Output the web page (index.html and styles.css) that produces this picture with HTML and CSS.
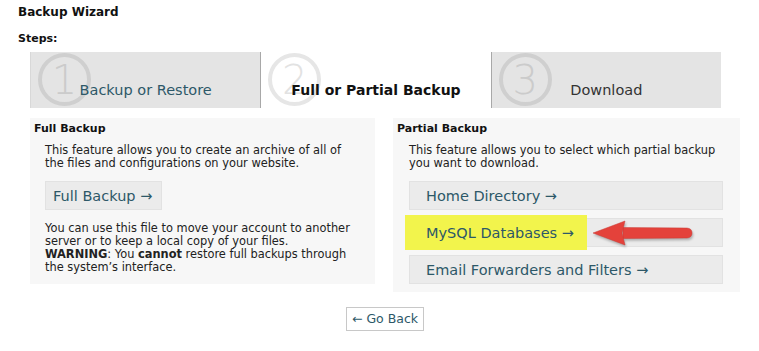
FILE: index.html
```html
<!DOCTYPE html>
<html lang="en">
<head>
    <meta charset="UTF-8">
    <title>Backup Wizard</title>
    <link rel="stylesheet" href="styles.css">
</head>
<body>
    <div class="page">
        <h1 class="title">Backup Wizard</h1>
        <div class="steps-label">Steps:</div>

        <div class="content">
            <div class="tabs">
                <div class="tab">
                    <span class="step-num">1</span>
                    <span class="tab-label">Backup or Restore</span>
                </div>
                <div class="tab active">
                    <span class="step-num">2</span>
                    <span class="tab-label">Full or Partial Backup</span>
                </div>
                <div class="tab">
                    <span class="step-num">3</span>
                    <span class="tab-label">Download</span>
                </div>
            </div>

            <div class="panels">
                <div class="panel panel-full">
                    <h3 class="panel-title">Full Backup</h3>
                    <div class="panel-body">
                        <p>This feature allows you to create an archive of all of the files and configurations on your website.</p>
                        <a class="btn btn-small" href="#">Full Backup &rarr;</a>
                        <p>You can use this file to move your account to another server or to keep a local copy of your files.<br>
                        <b>WARNING</b>: You <b>cannot</b> restore full backups through the system&rsquo;s interface.</p>
                    </div>
                </div>

                <div class="panel panel-partial">
                    <h3 class="panel-title">Partial Backup</h3>
                    <div class="panel-body">
                        <p>This feature allows you to select which partial backup you want to download.</p>
                        <div class="btn-list">
                            <a class="btn" href="#">Home Directory &rarr;</a>
                            <a class="btn btn-marked" href="#">
                                <span class="highlight"></span>
                                <span class="btn-text">MySQL Databases &rarr;</span>
                                <svg class="pointer" width="104" height="30" viewBox="0 0 104 30">
                                    <path d="M32 9.5 L96 10 Q101 10.5 101 15 Q101 19.5 96 20 L32 20.5 Z" fill="#e4423b" stroke="#c93a34" stroke-width="0.5"/>
                                    <path d="M2 15 L34 3 L31 15 L34 27 Z" fill="#e4423b" stroke="#c93a34" stroke-width="0.5" stroke-linejoin="round"/>
                                </svg>
                            </a>
                            <a class="btn" href="#">Email Forwarders and Filters &rarr;</a>
                        </div>
                    </div>
                </div>
            </div>

            <div class="back-row">
                <a class="back-btn" href="#">&larr; Go Back</a>
            </div>
        </div>
    </div>
</body>
</html>
```

FILE: styles.css
```css
body {
    margin: 0;
    background-color: #fff;
    color: #222;
    font-family: "DejaVu Sans", Verdana, sans-serif;
    font-size: 11px;
}
.page {
    padding: 4px 0 0 18px;
}
.title {
    margin: 0;
    font-size: 12px;
    line-height: 16px;
    font-weight: bold;
    color: #111;
}
.steps-label {
    margin-top: 12px;
    font-weight: bold;
    font-size: 11px;
    line-height: 14px;
    color: #111;
}
.content {
    width: 710px;
    margin-left: 12px;
}

/* wizard steps */
.tabs {
    display: flex;
    width: 691px;
    margin-top: 6px;
}
.tab {
    position: relative;
    flex: 1;
    height: 56px;
    box-sizing: border-box;
    padding-top: 27px;
    text-align: center;
    background-color: #e4e4e4;
    border-left: 1px solid #a8a8a8;
    overflow: hidden;
}
.tab:first-child {
    border-left: 1px solid #d8d8d8;
}
.tab.active {
    background-color: #fff;
}
.tab-label {
    position: relative;
    font-size: 14.5px;
    line-height: 22px;
    color: #2d5868;
}
.tab.active .tab-label {
    font-weight: bold;
    font-size: 14px;
    color: #111;
}
.tab:last-child .tab-label {
    color: #333;
}
.step-num {
    position: absolute;
    left: 7px;
    top: 1px;
    width: 45px;
    height: 45px;
    border: 4px solid #cfcfcf;
    border-radius: 50%;
    color: #cbcbcb;
    font-size: 40px;
    font-weight: 200;
    line-height: 46px;
    text-align: center;
}
.tab.active .step-num {
    border-color: #e6e6e6;
    color: #e2e2e2;
}

/* panels */
.panels {
    display: flex;
    align-items: flex-start;
    gap: 18px;
    margin-top: 10px;
}
.panel {
    background-color: #f7f7f7;
    padding: 4px 0 10px 4px;
    box-sizing: border-box;
}
.panel-full {
    width: 345px;
}
.panel-partial {
    width: 347px;
    padding-bottom: 8px;
}
.panel-title {
    margin: 0;
    font-size: 11px;
    line-height: 14px;
    font-weight: bold;
    color: #111;
}
.panel-body {
    padding: 0 17px 0 12px;
}
.panel-full .panel-body {
    padding-left: 11px;
}
.panel-body p {
    margin: 8px 0 0;
    font-size: 11.4px;
    line-height: 13px;
    color: #222;
}
.btn {
    display: block;
    position: relative;
    height: 29px;
    box-sizing: border-box;
    padding: 0 16px;
    line-height: 28px;
    font-size: 14.5px;
    color: #2d5868;
    text-decoration: none;
    background-color: #ebebeb;
    border: 1px solid #e2e2e2;
}
.btn-small {
    display: inline-block;
    line-height: 28px;
    padding: 0 9px 0 7px;
    margin: 11px 0 4px;
}
.btn-list {
    display: flex;
    flex-direction: column;
    gap: 8px;
    margin-top: 11px;
}
.btn-text {
    position: relative;
}
.highlight {
    position: absolute;
    left: -5px;
    top: -4px;
    width: 182px;
    height: 35px;
    background-color: #f2f44c;
}
.pointer {
    position: absolute;
    left: 181px;
    top: -1px;
    filter: drop-shadow(1px 2px 1px rgba(0, 0, 0, 0.25));
}

/* go back */
.back-row {
    display: flex;
    justify-content: center;
    margin-top: 15px;
}
.back-btn {
    display: inline-block;
    height: 24px;
    box-sizing: border-box;
    padding: 0 5px;
    line-height: 22px;
    border: 1px solid #c8c8c8;
    font-size: 12.5px;
    color: #2d5868;
    text-decoration: none;
}
```
